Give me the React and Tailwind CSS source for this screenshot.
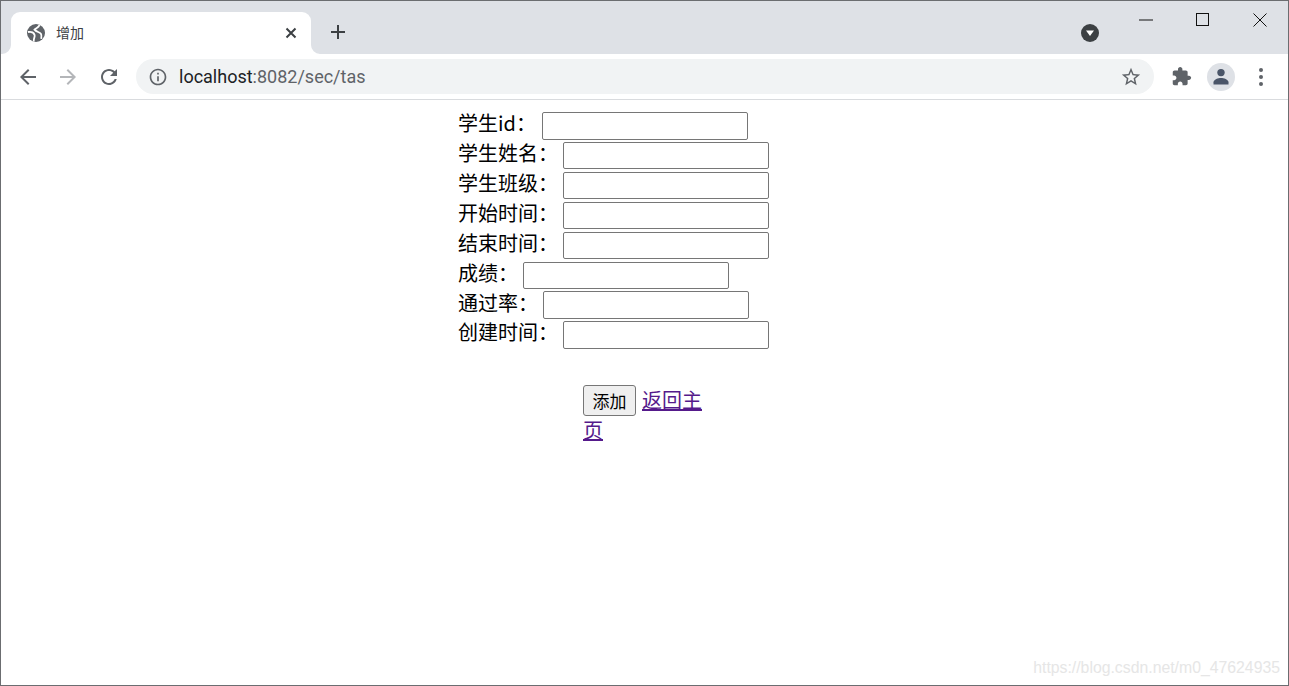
import React from 'react';

const Icon = ({ d, className, size = 24, viewBox = '0 0 24 24' }) => (
  <svg width={size} height={size} viewBox={viewBox} className={className} fill="currentColor">
    <path d={d} />
  </svg>
);

const icons = {
  back: 'M20 11H7.83l5.59-5.59L12 4l-8 8 8 8 1.41-1.41L7.83 13H20v-2z',
  forward: 'M12 4l-1.41 1.41L16.17 11H4v2h12.17l-5.58 5.59L12 20l8-8z',
  reload: 'M17.65 6.35C16.2 4.9 14.21 4 12 4c-4.42 0-7.99 3.58-7.99 8s3.57 8 7.99 8c3.73 0 6.84-2.55 7.73-6h-2.08c-.82 2.33-3.04 4-5.65 4-3.31 0-6-2.69-6-6s2.69-6 6-6c1.66 0 3.14.69 4.22 1.78L13 11h7V4l-2.35 2.35z',
  info: 'M11 7h2v2h-2zm0 4h2v6h-2zm1-9C6.48 2 2 6.48 2 12s4.48 10 10 10 10-4.48 10-10S17.52 2 12 2zm0 18c-4.41 0-8-3.59-8-8s3.59-8 8-8 8 3.59 8 8-3.59 8-8 8z',
  star: 'M22 9.24l-7.19-.62L12 2 9.19 8.63 2 9.24l5.46 4.73L5.82 21 12 17.27 18.18 21l-1.63-7.03L22 9.24zM12 15.4l-3.76 2.27 1-4.28-3.32-2.88 4.38-.38L12 6.1l1.71 4.04 4.38.38-3.32 2.88 1 4.28L12 15.4z',
  puzzle: 'M20.5 11H19V7c0-1.1-.9-2-2-2h-4V3.5C13 2.12 11.88 1 10.5 1S8 2.12 8 3.5V5H4c-1.1 0-1.99.9-1.99 2v3.8H3.5c1.49 0 2.7 1.21 2.7 2.7s-1.21 2.7-2.7 2.7H2V20c0 1.1.9 2 2 2h3.8v-1.5c0-1.49 1.21-2.7 2.7-2.7 1.49 0 2.7 1.21 2.7 2.7V22H17c1.1 0 2-.9 2-2v-4h1.5c1.38 0 2.5-1.12 2.5-2.5S21.88 11 20.5 11z',
};

const fields = [
  { label: '学生id：', width: 'w-[84px]' },
  { label: '学生姓名：', width: 'w-[105px]' },
  { label: '学生班级：', width: 'w-[105px]' },
  { label: '开始时间：', width: 'w-[105px]' },
  { label: '结束时间：', width: 'w-[105px]' },
  { label: '成绩：', width: 'w-[65px]' },
  { label: '通过率：', width: 'w-[85px]' },
  { label: '创建时间：', width: 'w-[105px]' },
];

const TabStrip = () => (
  <div className="flex h-[53px] shrink-0 bg-[#dee1e6]">
    <div className="ml-[10px] mt-[11px] relative flex h-[42px] w-[300px] items-center rounded-t-[9px] bg-white pl-[16px] pb-[1px]">
      <svg width="9" height="9" viewBox="0 0 9 9" className="absolute -left-[9px] bottom-0 text-white" fill="currentColor">
        <path d="M9 0v9H0a9 9 0 0 0 9-9z" />
      </svg>
      <svg width="9" height="9" viewBox="0 0 9 9" className="absolute -right-[9px] bottom-0 text-white" fill="currentColor">
        <path d="M0 0v9H9a9 9 0 0 1-9-9z" />
      </svg>
      <svg width="18" height="18" viewBox="0 0 18 18" fill="none">
        <circle cx="9" cy="9" r="9" fill="#5f6368" />
        <path d="M1 8c3.5-.8 6 .8 6.6 3 .5 2-1 3-.9 6.5" stroke="#fff" strokeWidth="1.8" />
        <path d="M12.5 1c-.8 2.6-3.4 3-5 4.6 2 2.6 5 2.2 6.4 4.2 1 1.5.6 3.2.3 5" stroke="#fff" strokeWidth="1.8" />
      </svg>
      <span className="ml-[11px] text-[14px] text-[#3c4043]">增加</span>
      <svg width="12" height="12" viewBox="0 0 12 12" className="ml-auto mr-[14px] text-[#3c4043]" stroke="currentColor" strokeWidth="2" fill="none">
        <path d="M1.5 1.5l9 9M10.5 1.5l-9 9" />
      </svg>
    </div>
    <svg width="16" height="16" viewBox="0 0 16 16" className="ml-[19px] mt-[23px] text-[#3c4043]" stroke="currentColor" strokeWidth="2" fill="none">
      <path d="M8 1v14M1 8h14" />
    </svg>
    <svg width="18" height="18" viewBox="0 0 18 18" className="ml-[735px] mt-[23px]">
      <circle cx="9" cy="9" r="9" fill="#3c4043" />
      <path d="M5 6.5h8L9 12z" fill="#fff" />
    </svg>
    <svg width="14" height="2" viewBox="0 0 14 2" className="ml-[40px] mt-[18px]">
      <path d="M0 1h14" stroke="#111" strokeWidth="1" />
    </svg>
    <svg width="14" height="14" viewBox="0 0 14 14" className="ml-[43px] mt-[12px]">
      <rect x="0.5" y="0.5" width="12" height="12" stroke="#111" fill="none" />
    </svg>
    <svg width="14" height="14" viewBox="0 0 14 14" className="ml-[43px] mt-[12px]">
      <path d="M.5.5l13 13M13.5.5l-13 13" stroke="#111" fill="none" />
    </svg>
  </div>
);

const Toolbar = () => (
  <div className="flex h-[46px] shrink-0 items-center border-b border-[#d9dbde] bg-white">
    <Icon d={icons.back} className="ml-[15px] text-[#5f6368]" />
    <Icon d={icons.forward} className="ml-[16px] text-[#b4b6b9]" />
    <Icon d={icons.reload} className="ml-[17px] text-[#5f6368]" />
    <div className="ml-[15px] flex h-[35px] w-[1018px] items-center rounded-full bg-[#f1f3f4]">
      <Icon d={icons.info} size={20} className="ml-[12px] text-[#5f6368]" />
      <span className="ml-[11px] -mt-[1px] text-[18px] text-[#5f6368] font-['Roboto',sans-serif]">
        <span className="text-[#202124]">localhost</span>:8082/sec/tas
      </span>
      <Icon d={icons.star} size={22} className="ml-auto mr-[12px] text-[#5f6368]" />
    </div>
    <Icon d={icons.puzzle} size={21} className="ml-[17px] text-[#5f6368]" />
    <div className="ml-[15px] flex h-[28px] w-[28px] items-center justify-center rounded-full bg-[#dee1e6]">
      <svg width="20" height="20" viewBox="0 0 20 20" fill="#4a5568">
        <circle cx="10" cy="5.6" r="3.7" />
        <path d="M2.5 17.5v-2.2c0-2.8 4.8-4.3 7.5-4.3s7.5 1.5 7.5 4.3v2.2z" />
      </svg>
    </div>
    <div className="ml-[24px] flex flex-col gap-[3px]">
      <span className="h-[4px] w-[4px] rounded-full bg-[#5f6368]" />
      <span className="h-[4px] w-[4px] rounded-full bg-[#5f6368]" />
      <span className="h-[4px] w-[4px] rounded-full bg-[#5f6368]" />
    </div>
  </div>
);

const App = () => {
  return (
    <div className="relative flex h-[686px] flex-col overflow-hidden border border-[#6b6d70] bg-white font-['Noto_Sans_CJK_SC','Noto_Sans',sans-serif]">
      <TabStrip />
      <Toolbar />

      <form className="pl-[457px] pt-[11px] text-[20px] text-black">
        {fields.map((f) => (
          <div key={f.label} className="flex h-[29.86px] items-center">
            <label className={`${f.width} shrink-0 leading-none -mt-[5px]`}>{f.label}</label>
            <input className="h-[27.4px] w-[206px] rounded-[2px] border border-[#767676] bg-white" />
          </div>
        ))}
        <div className="ml-[125px] mt-[35px] w-[120px] leading-[30px]">
          <button type="button" className="mr-[6px] -mb-[1px] h-[31px] w-[53px] rounded-[3px] border border-[#767676] bg-[#efefef] text-[17px] leading-none align-top">添加</button>
          <a href="#" className="text-[#551a8b] underline">返回主页</a>
        </div>
      </form>

      <div className="absolute bottom-[5px] right-[8px] text-[15.8px] text-[#e6e6e6] font-['Liberation_Sans',sans-serif]">
        https://blog.csdn.net/m0_47624935
      </div>
    </div>
  );
};

export default App;
